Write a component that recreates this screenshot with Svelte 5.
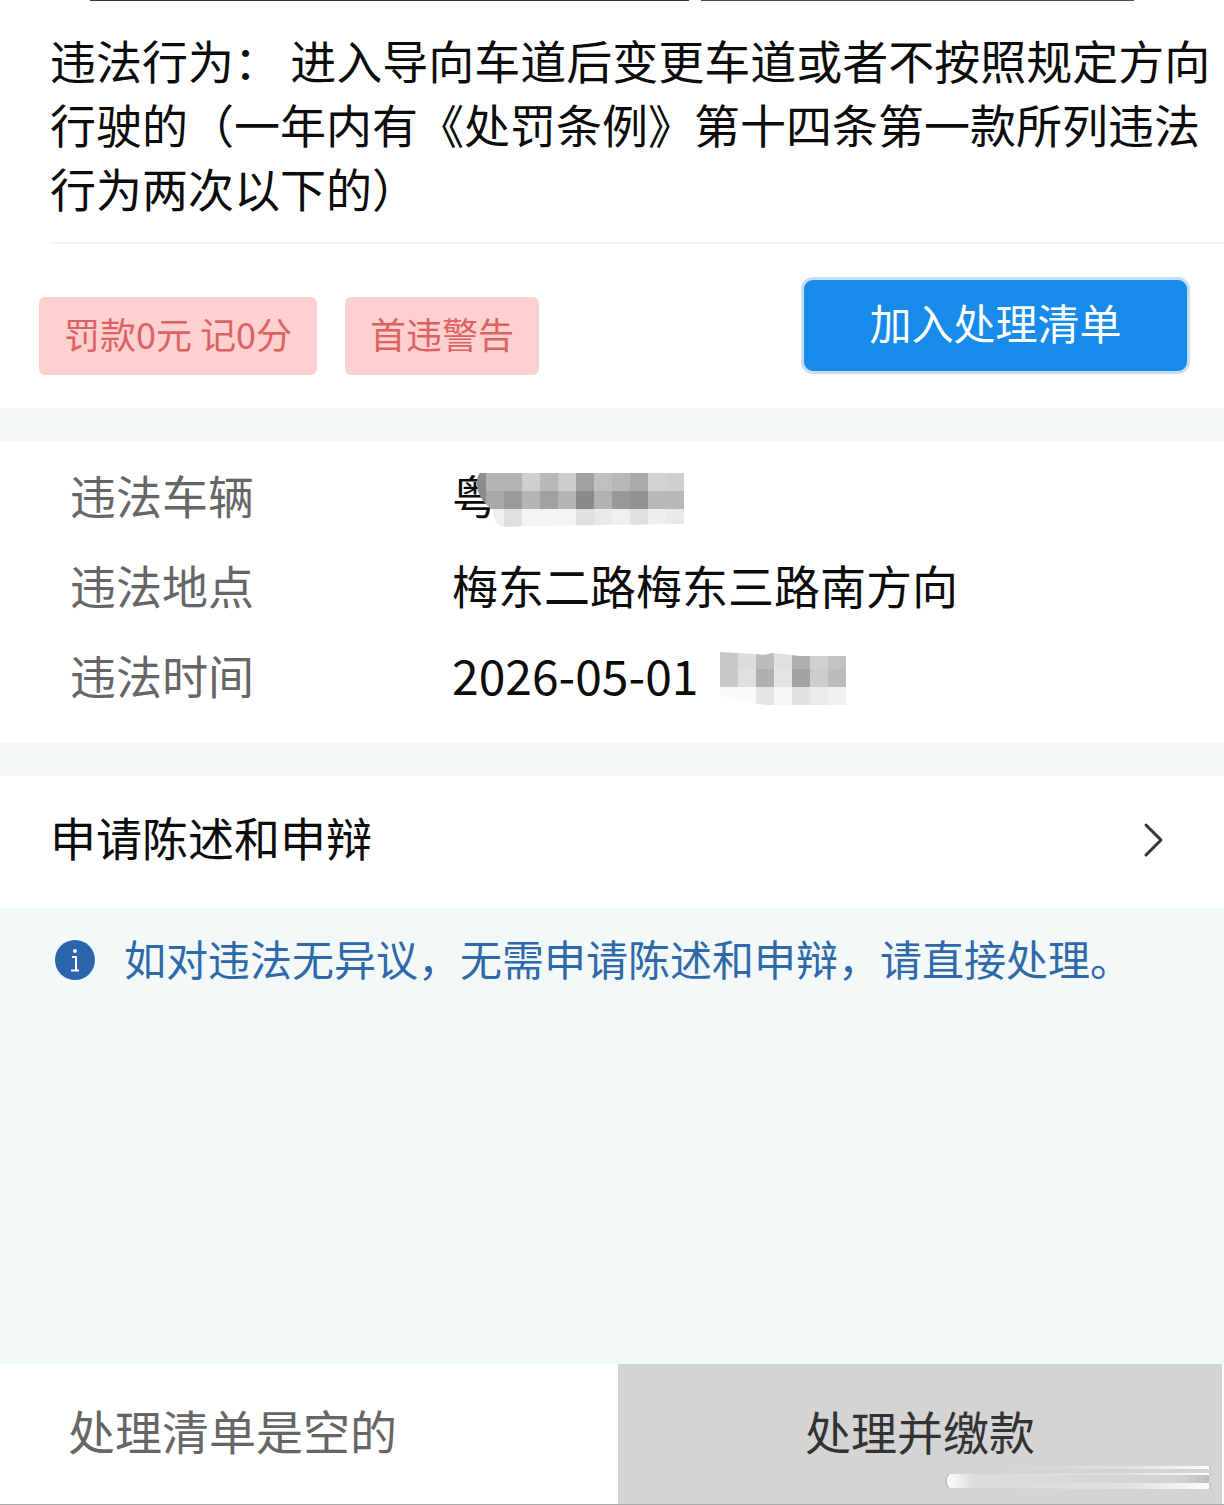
<script>
    const tags = ['罚款0元 记0分', '首违警告'];

    const plateCells = [
        ['#b3b3b3', '#b3b3b3', '#cfcfcf', '#b8b8b8', '#cccccc', '#a0a0a0', '#c0c0c0', '#b8b8b8', '#aaaaaa', '#d2d2d2', '#cfcfcf'],
        ['#a8a8a8', '#9b9b9b', '#b5b5b5', '#a0a0a0', '#b5b5b5', '#8a8a8a', '#b2b2b2', '#989898', '#929292', '#b8b8b8', '#b8b8b8'],
        ['#f0f0f0', '#e0e0e0', '#f3f3f3', '#f3f3f3', '#f3f3f3', '#e0e0e0', '#e9e9e9', '#efefef', '#e0e0e0', '#eeeeee', '#e9e9e9']
    ];

    const timeCells = [
        ['#c8c8c8', '#dddddd', '#bbbbbb', '#e0e0e0', '#b0b0b0', '#d0d0d0', '#c2c2c2'],
        ['#c8c8c8', '#e0e0e0', '#b0b0b0', '#e4e4e4', '#a2a2a2', '#cccccc', '#bbbbbb'],
        ['#f8f8f8', '#fafafa', '#e4e4e4', '#f6f6f6', '#e2e2e2', '#eaeaea', '#f0f0f0']
    ];

    function addToList() {}
    function openAppeal() {}
    function pay() {}
</script>

<div class="page">
    <div class="topEdge">
        <span class="edge left"></span>
        <span class="edge right"></span>
    </div>

    <section class="violation">
        <p class="behavior">违法行为： 进入导向车道后变更车道或者不按照规定方向行驶的（一年内有《处罚条例》第十四条第一款所列违法行为两次以下的）</p>
        <div class="actions">
            {#each tags as tag}
                <span class="tag">{tag}</span>
            {/each}
            <button class="addButton" on:click={addToList}>加入处理清单</button>
        </div>
    </section>

    <dl class="details">
        <div class="row">
            <dt>违法车辆</dt>
            <dd class="plate">
                粤
                <svg class="plateMask" width="207" height="54" viewBox="0 0 207 54" aria-hidden="true">
                    <clipPath id="plateClip">
                        <path d="M3 0H207V51L60 53L24 54Q16 50 16 37Q0 26 0 10Q0 3 3 0Z" />
                    </clipPath>
                    <g clip-path="url(#plateClip)" shape-rendering="crispEdges">
                        <rect width="9" height="36" fill="#8c8c8c" />
                        {#each plateCells as line, y}
                            {#each line as color, x}
                                <rect x={9 + x * 18} y={y * 18} width="18" height="18" fill={color} />
                            {/each}
                        {/each}
                    </g>
                </svg>
            </dd>
        </div>
        <div class="row">
            <dt>违法地点</dt>
            <dd>梅东二路梅东三路南方向</dd>
        </div>
        <div class="row">
            <dt>违法时间</dt>
            <dd class="time">
                2026-05-01
                <svg width="126" height="54" viewBox="0 0 126 54" aria-hidden="true">
                    <clipPath id="timeClip">
                        <path d="M0 1L36 3Q46 5 52 2L80 5H126V54H48Q20 52 0 44Z" />
                    </clipPath>
                    <g clip-path="url(#timeClip)" shape-rendering="crispEdges">
                        {#each timeCells as line, y}
                            {#each line as color, x}
                                <rect x={x * 18} y={y * 18} width="18" height="18" fill={color} />
                            {/each}
                        {/each}
                    </g>
                </svg>
            </dd>
        </div>
    </dl>

    <button class="appeal" on:click={openAppeal}>
        <span>申请陈述和申辩</span>
        <svg width="24" height="36" viewBox="0 0 24 36" aria-hidden="true">
            <path d="M4 3L19 18L4 33" fill="none" stroke="#333" stroke-width="3" stroke-linecap="round" stroke-linejoin="round" />
        </svg>
    </button>

    <div class="notice">
        <svg width="42" height="42" viewBox="0 0 42 42" aria-hidden="true">
            <circle cx="21" cy="21" r="20" fill="#2c65ad" />
            <circle cx="21" cy="12" r="2" fill="#fff" />
            <path d="M18 18H22V31M17 31.5H25" fill="none" stroke="#fff" stroke-width="2" />
        </svg>
        <span>如对违法无异议，无需申请陈述和申辩，请直接处理。</span>
    </div>

    <footer>
        <div class="listState">处理清单是空的</div>
        <button class="pay" on:click={pay}>处理并缴款</button>
        <svg class="smudge" width="270" height="32" viewBox="0 0 270 32" aria-hidden="true">
            <defs>
                <linearGradient id="fadeLeft">
                    <stop offset="0" stop-color="#fff" />
                    <stop offset="0.1" stop-color="#dedede" />
                    <stop offset="0.5" stop-color="#d8d8d8" />
                    <stop offset="0.9" stop-color="#d2d2d2" />
                    <stop offset="1" stop-color="#bebebe" />
                </linearGradient>
                <linearGradient id="fadeRight">
                    <stop offset="0" stop-color="#fff" stop-opacity="0" />
                    <stop offset="0.6" stop-color="#fff" stop-opacity="0.3" />
                    <stop offset="1" stop-color="#fff" />
                </linearGradient>
            </defs>
            <path d="M5 10H265V24H5Q-1 17 5 10Z" fill="url(#fadeLeft)" />
            <path d="M5 10Q-1 17 5 24" fill="none" stroke="#aaa" />
            <rect x="60" y="2" width="206" height="3" fill="url(#fadeRight)" />
            <rect x="60" y="9" width="206" height="2" fill="url(#fadeRight)" />
            <rect x="60" y="19" width="206" height="6" rx="2" fill="url(#fadeRight)" />
            <path d="M266 2V5M266 9V11M266 19V25" stroke="#aaa" />
        </svg>
    </footer>
</div>

<style>
    :global(body) {
        margin: 0;
    }

    .page {
        min-height: 100vh;
        display: flex;
        flex-direction: column;
        background-color: #f3f9f9;
        font-family: 'Noto Sans CJK SC', sans-serif;
        font-size: 46px;
        line-height: 64px;
        color: #0c0c0c;
    }

    button {
        margin: 0;
        padding: 0;
        border: none;
        font: inherit;
        color: inherit;
        cursor: pointer;
    }

    .topEdge {
        display: flex;
        gap: 12px;
        height: 1px;
        padding: 0 90px;
        background-color: #fff;
    }

    .edge {
        background-color: #333;
    }

    .edge.left {
        flex: 58;
    }

    .edge.right {
        flex: 42;
        background-color: #4a4a4a;
    }

    .violation {
        background-color: #fff;
        padding-top: 26px;
    }

    .behavior {
        margin: 0 0 0 50px;
        padding: 0 8px 23px 0;
        border-bottom: 2px solid #f3f3f3;
    }

    .actions {
        display: flex;
        align-items: flex-start;
        gap: 28px;
        padding: 33px 34px 33px 39px;
    }

    .tag {
        margin-top: 20px;
        padding: 4px 25px 10px;
        border-radius: 6px;
        background-color: #ffd0d0;
        color: #dc6363;
        font-size: 36px;
    }

    .addButton {
        width: 389px;
        height: 97px;
        margin-left: auto;
        padding-bottom: 8px;
        border: 3px solid #c5def5;
        border-radius: 12px;
        background-color: #168bea;
        color: #fff;
        font-size: 42px;
    }

    .details {
        margin: 33px 0;
        padding: 8px 0 24px;
        background-color: #fff;
    }

    .row {
        display: flex;
        align-items: center;
        height: 90px;
        padding-left: 70px;
    }

    dt {
        width: 382px;
        color: #666;
    }

    dd {
        margin: 0;
    }

    .plate {
        position: relative;
    }

    .plateMask {
        position: absolute;
        left: 25px;
        top: 11px;
    }

    .time {
        display: flex;
        align-items: center;
        gap: 22px;
        font-size: 48px;
    }

    .time svg {
        margin-top: 8px;
    }

    .appeal {
        display: flex;
        align-items: center;
        justify-content: space-between;
        height: 132px;
        padding: 0 58px 4px 50px;
        background-color: #fff;
    }

    .appeal span {
        padding-bottom: 8px;
    }

    .notice {
        display: flex;
        align-items: center;
        gap: 28px;
        padding: 18px 54px;
        color: #2f69aa;
        font-size: 42px;
    }

    .notice svg {
        margin-top: 4px;
    }

    footer {
        position: relative;
        display: flex;
        height: 140px;
        margin-top: auto;
        border-bottom: 1px solid #aaa;
        background-color: #fff;
    }

    .listState {
        flex: 1;
        padding: 34px 68px;
        color: #666;
        font-size: 47px;
    }

    .pay {
        width: 604px;
        margin-right: 2px;
        padding-bottom: 8px;
        background-color: #d4d4d4;
        color: #333;
    }

    .smudge {
        position: absolute;
        right: 10px;
        bottom: 8px;
    }
</style>
